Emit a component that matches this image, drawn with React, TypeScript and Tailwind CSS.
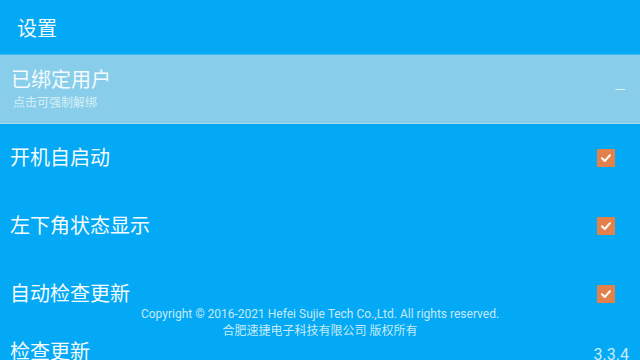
import React from 'react';

const FONT = { fontFamily: "Roboto, 'Noto Sans CJK SC', sans-serif" };

const CheckBox: React.FC = () => (
  <div className="w-[18px] h-[18px] bg-[#E3804B] rounded-[1px] flex items-center justify-center">
    <svg width="12" height="12" viewBox="0 0 12 12" fill="none">
      <path d="M2 6.2 L4.8 9 L10 3.2" stroke="#fff" strokeWidth="2" strokeLinecap="round" strokeLinejoin="round" />
    </svg>
  </div>
);

const ToggleRow: React.FC<{ title: string }> = ({ title }) => (
  <div className="h-[68px] flex items-center justify-between pl-[10px] pr-[25px]">
    <span className="text-[20px] leading-[24px] text-[#F4FBFF]">{title}</span>
    <CheckBox />
  </div>
);

export default function App() {
  return (
    <div className="w-[640px] h-[360px] overflow-hidden relative bg-[#03A9F4]" style={FONT}>
      <header className="h-[55px] flex items-center pl-[17px] pt-[3px] border-b border-[#3cbcf4]">
        <h1 className="text-[20px] leading-[24px] text-[#F4FBFF]">设置</h1>
      </header>

      <div className="h-[69px] bg-[#88CEEA] border-b border-[#a6dbf1] flex items-center justify-between pl-[11px] pr-[15px]">
        <div className="flex flex-col gap-[3px]">
          <span className="text-[20px] leading-[24px] text-[#F4FBFF]">已绑定用户</span>
          <span className="text-[12px] leading-[16px] pl-[2px] text-[#D6EEF8]">点击可强制解绑</span>
        </div>
        <span className="text-[12px] leading-[14px] text-[#EAF6FB]">---</span>
      </div>

      <ToggleRow title="开机自启动" />
      <ToggleRow title="左下角状态显示" />
      <ToggleRow title="自动检查更新" />

      <div className="h-[68px] flex items-start justify-between pl-[10px] pr-[11px] pt-[12px]">
        <span className="text-[20px] leading-[24px] text-[#F4FBFF]">检查更新</span>
        <span className="text-[16px] leading-[20px] mt-[5px] text-[#C8EBFB]">3.3.4</span>
      </div>

      <div className="absolute left-0 right-0 top-[306px] flex flex-col items-center text-[12px] leading-[17px] text-[#C6E9FA]">
        <span>Copyright © 2016-2021 Hefei Sujie Tech Co.,Ltd. All rights reserved.</span>
        <span>合肥速捷电子科技有限公司 版权所有</span>
      </div>
    </div>
  );
}
